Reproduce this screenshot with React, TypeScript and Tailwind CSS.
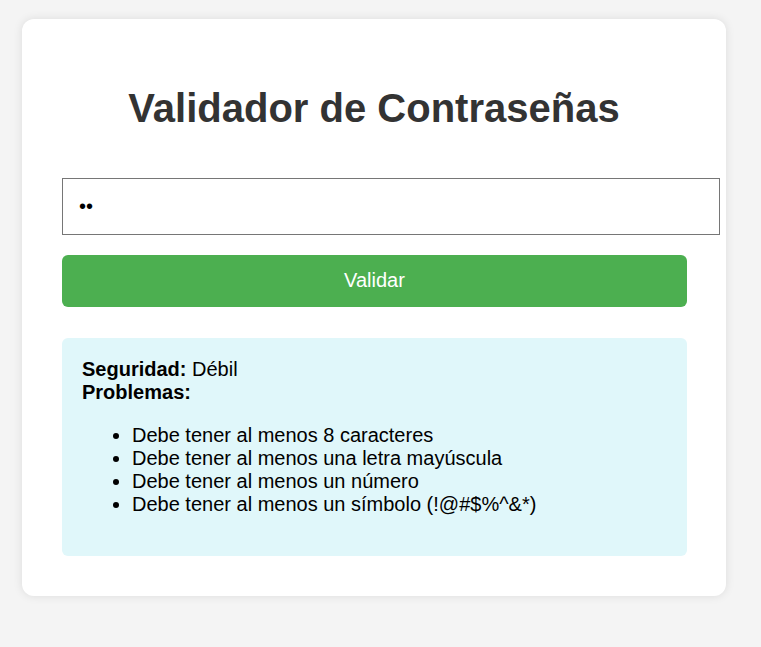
import React, { useState } from 'react';

const issues = [
    'Debe tener al menos 8 caracteres',
    'Debe tener al menos una letra mayúscula',
    'Debe tener al menos un número',
    'Debe tener al menos un símbolo (!@#$%^&*)',
];

export default function App() {
    const [password, setPassword] = useState('ab');

    return (
        <div className="min-h-screen bg-[#f4f4f4] pt-[19px] pl-[22px] pb-[51px] font-['Liberation_Sans',Arial,sans-serif] text-[20px] leading-[23px]">
            <div className="flex w-[704px] flex-col rounded-[12px] bg-white p-[40px] shadow-[0_0_10px_rgba(0,0,0,0.1)]">
                <h1 className="my-[26.4px] text-center text-[40px] leading-[46px] font-bold text-[#333]">
                    Validador de Contraseñas
                </h1>
                <input
                    type="password"
                    value={password}
                    onChange={(e) => setPassword(e.target.value)}
                    className="mt-[20px] block w-[658px] border border-[#767676] bg-white px-[16px] py-[16px] text-[20px] leading-[23px] text-black outline-none"
                />
                <button className="mt-[20px] block h-[52px] w-[625px] rounded-[6px] bg-[#4CAF50] text-[20px] text-white">
                    Validar
                </button>
                <div className="mt-[31px] w-[625px] rounded-[6px] bg-[#e0f7fa] p-[20px] text-black">
                    <div>
                        <strong>Seguridad:</strong> Débil
                    </div>
                    <div>
                        <strong>Problemas:</strong>
                    </div>
                    <ul className="my-[20px] list-disc pl-[50px]">
                        {issues.map((item) => (
                            <li key={item}>{item}</li>
                        ))}
                    </ul>
                </div>
            </div>
        </div>
    );
}
